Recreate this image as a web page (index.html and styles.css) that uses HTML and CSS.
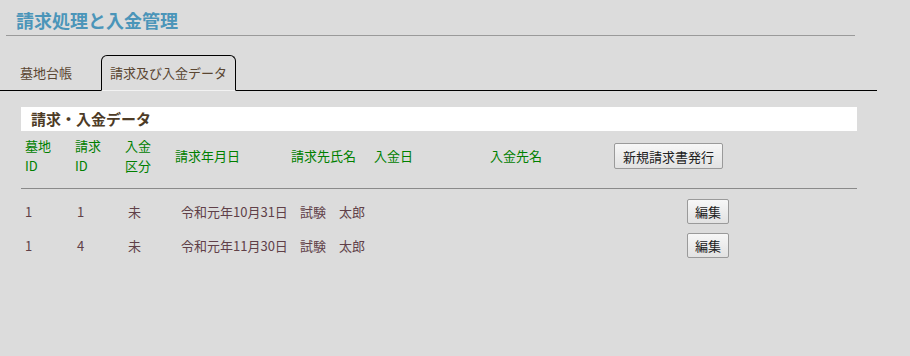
FILE: index.html
```html
<!DOCTYPE html>
<html lang="ja">

<head>
    <meta charset="UTF-8" />
    <meta name="viewport" content="width=device-width, initial-scale=1.0" />
    <title>請求処理と入金管理</title>
    <link rel="stylesheet" href="styles.css">
</head>

<body>
    <div class="page-head">
        <h1 class="page-title">請求処理と入金管理</h1>
    </div>

    <div class="tabs">
        <div class="tab">墓地台帳</div>
        <div class="tab active">請求及び入金データ</div>
    </div>

    <div class="section">
        <div class="section-title">請求・入金データ</div>

        <div class="list-head">
            <div>墓地<br>ID</div>
            <div>請求<br>ID</div>
            <div>入金<br>区分</div>
            <div>請求年月日</div>
            <div>請求先氏名</div>
            <div>入金日</div>
            <div>入金先名</div>
            <div><button class="btn btn-new">新規請求書発行</button></div>
        </div>

        <div class="list-body">
            <div class="list-row">
                <div>1</div>
                <div>1</div>
                <div>未</div>
                <div>令和元年10月31日</div>
                <div>試験　太郎</div>
                <div><button class="btn btn-edit">編集</button></div>
            </div>
            <div class="list-row">
                <div>1</div>
                <div>4</div>
                <div>未</div>
                <div>令和元年11月30日</div>
                <div>試験　太郎</div>
                <div><button class="btn btn-edit">編集</button></div>
            </div>
        </div>
    </div>
</body>

</html>
```

FILE: styles.css
```css
body {
    margin: 0;
    background: #dcdcdc;
    font-family: "Noto Sans CJK JP", "Noto Sans", sans-serif;
    font-size: 13px;
}

/* タイトル */
.page-head {
    margin: 8px 0 0 6px;
    width: 839px;
    padding: 0 0 3px 10px;
    border-bottom: 1px solid #9a9a9a;
}

.page-title {
    margin: 0;
    font-size: 18px;
    line-height: 24px;
    font-weight: bold;
    color: #4b95b9;
}

/* タブ */
.tabs {
    display: flex;
    align-items: flex-end;
    gap: 20px;
    width: 866px;
    padding: 19px 0 0 11px;
    border-bottom: 1px solid #000;
}

.tab {
    height: 34px;
    line-height: 34px;
    padding: 0 8px;
    color: #5a4632;
    border: 1px solid transparent;
    border-bottom: none;
}

.tab.active {
    border: 1px solid #000;
    border-bottom: 1px solid #f2f2f2;
    border-radius: 6px 6px 0 0;
    margin-bottom: -1px;
}

/* 一覧 */
.section {
    margin: 16px 0 0 21px;
    width: 836px;
}

.section-title {
    background: #fff;
    height: 24px;
    line-height: 24px;
    padding-left: 10px;
    font-size: 15px;
    font-weight: bold;
    color: #4d3b26;
}

.list-head {
    display: grid;
    grid-template-columns: 50px 50px 50px 116px 83px 116px 124px auto;
    align-items: center;
    padding: 5px 0 12px 4px;
    border-bottom: 1px solid #8a8a8a;
    line-height: 20px;
    color: #008000;
}

.list-body {
    display: flex;
    flex-direction: column;
    gap: 9px;
    padding: 10px 0 0 4px;
}

.list-row {
    display: grid;
    grid-template-columns: 52px 51px 53px 119px 387px auto;
    align-items: center;
    height: 25px;
    color: #604048;
}

.btn {
    font-family: inherit;
    font-size: 13px;
    color: #222;
    background: linear-gradient(#f7f7f7, #e2e2e2);
    border: 1px solid #9a9a9a;
    border-radius: 2px;
    padding: 0 8px;
    margin: 0;
    display: block;
}

.btn-new {
    height: 26px;
}

.btn-edit {
    height: 25px;
    padding: 0 7px;
}
```
